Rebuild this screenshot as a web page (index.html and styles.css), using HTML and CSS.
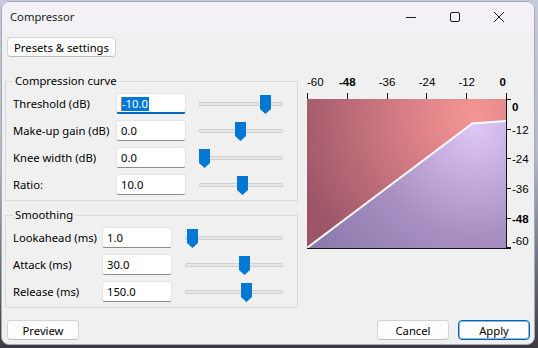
FILE: index.html
```html
<!DOCTYPE html>
<html>
<head>
<meta charset="utf-8">
<link rel="stylesheet" href="styles.css">
</head>
<body>
<div class="window">
  <div class="titlebar">
    <span class="title">Compressor</span>
    <span class="ctl"><svg width="10" height="10" viewBox="0 0 10 10"><line x1="0" y1="5.5" x2="10" y2="5.5"/></svg></span>
    <span class="ctl"><svg width="10" height="10" viewBox="0 0 10 10"><rect x="0.5" y="0.5" width="9" height="9" rx="1.5"/></svg></span>
    <span class="ctl"><svg width="10" height="10" viewBox="0 0 10 10"><line x1="0" y1="0" x2="10" y2="10"/><line x1="10" y1="0" x2="0" y2="10"/></svg></span>
  </div>
  <div class="content">
    <button class="btn presets">Presets &amp; settings</button>
    <div class="main">
      <div class="left">
        <fieldset class="group g1">
          <legend>Compression curve</legend>
          <div class="row">
            <span class="lbl">Threshold (dB)</span>
            <div class="tb focus"><span class="sel">-10.0</span></div>
            <div class="slider"><div class="track"></div><svg class="thumb" style="left:61px" viewBox="0 0 11 19"><polygon points="0,0 11,0 11,14 5.5,19 0,14"/></svg></div>
          </div>
          <div class="row">
            <span class="lbl">Make-up gain (dB)</span>
            <div class="tb">0.0</div>
            <div class="slider"><div class="track"></div><svg class="thumb" style="left:36px" viewBox="0 0 11 19"><polygon points="0,0 11,0 11,14 5.5,19 0,14"/></svg></div>
          </div>
          <div class="row">
            <span class="lbl">Knee width (dB)</span>
            <div class="tb">0.0</div>
            <div class="slider"><div class="track"></div><svg class="thumb" style="left:0px" viewBox="0 0 11 19"><polygon points="0,0 11,0 11,14 5.5,19 0,14"/></svg></div>
          </div>
          <div class="row">
            <span class="lbl">Ratio:</span>
            <div class="tb">10.0</div>
            <div class="slider"><div class="track"></div><svg class="thumb" style="left:38px" viewBox="0 0 11 19"><polygon points="0,0 11,0 11,14 5.5,19 0,14"/></svg></div>
          </div>
        </fieldset>
        <fieldset class="group g2">
          <legend>Smoothing</legend>
          <div class="row">
            <span class="lbl">Lookahead (ms)</span>
            <div class="tb">1.0</div>
            <div class="slider"><div class="track"></div><svg class="thumb" style="left:2px" viewBox="0 0 11 19"><polygon points="0,0 11,0 11,14 5.5,19 0,14"/></svg></div>
          </div>
          <div class="row">
            <span class="lbl">Attack (ms)</span>
            <div class="tb">30.0</div>
            <div class="slider"><div class="track"></div><svg class="thumb" style="left:54px" viewBox="0 0 11 19"><polygon points="0,0 11,0 11,14 5.5,19 0,14"/></svg></div>
          </div>
          <div class="row">
            <span class="lbl">Release (ms)</span>
            <div class="tb">150.0</div>
            <div class="slider"><div class="track"></div><svg class="thumb" style="left:56px" viewBox="0 0 11 19"><polygon points="0,0 11,0 11,14 5.5,19 0,14"/></svg></div>
          </div>
        </fieldset>
      </div>
      <svg class="graph" width="234" height="180" viewBox="298 74 234 180">
        <defs>
          <radialGradient id="up" gradientUnits="userSpaceOnUse" cx="474" cy="114" r="185">
            <stop offset="0" stop-color="#f49694"/>
            <stop offset="0.25" stop-color="#e2868a"/>
            <stop offset="1" stop-color="#9c5668"/>
          </radialGradient>
          <radialGradient id="lo" gradientUnits="userSpaceOnUse" cx="476" cy="128" r="215">
            <stop offset="0" stop-color="#ddc7f7"/>
            <stop offset="0.5" stop-color="#a78fc2"/>
            <stop offset="1" stop-color="#8676a6"/>
          </radialGradient>
        </defs>
        <polygon fill="url(#up)" points="307,99 506,99 506,121 472.3,123.5 307,248"/>
        <polygon fill="url(#lo)" points="307,248 472.3,123.5 506,121 506,248"/>
        <polyline class="curve" points="307.5,247.5 472.3,123.5 506,121"/>
        <g class="ticks">
          <line x1="307.5" y1="93" x2="307.5" y2="99"/>
          <line x1="347.5" y1="93" x2="347.5" y2="99"/>
          <line x1="387.5" y1="93" x2="387.5" y2="99"/>
          <line x1="426.5" y1="93" x2="426.5" y2="99"/>
          <line x1="466.5" y1="93" x2="466.5" y2="99"/>
          <line x1="506.5" y1="93" x2="506.5" y2="248"/>
          <line x1="506" y1="99.5" x2="511" y2="99.5"/>
          <line x1="506" y1="129.5" x2="511" y2="129.5"/>
          <line x1="506" y1="158.5" x2="511" y2="158.5"/>
          <line x1="506" y1="188.5" x2="511" y2="188.5"/>
          <line x1="506" y1="218.5" x2="511" y2="218.5"/>
          <line x1="506" y1="247.5" x2="511" y2="247.5"/>
          <line x1="307" y1="248.5" x2="511" y2="248.5"/>
        </g>
        <g class="lab">
          <text x="307" y="86">-60</text>
          <text x="347.3" y="86" text-anchor="middle" class="b">-48</text>
          <text x="387" y="86" text-anchor="middle">-36</text>
          <text x="427" y="86" text-anchor="middle">-24</text>
          <text x="466.7" y="86" text-anchor="middle">-12</text>
          <text x="506" y="86" text-anchor="end" class="b">0</text>
          <text x="512" y="111" class="b">0</text>
          <text x="512" y="133.5">-12</text>
          <text x="512" y="163">-24</text>
          <text x="512" y="193">-36</text>
          <text x="512" y="222.5" class="b">-48</text>
          <text x="512" y="245">-60</text>
        </g>
      </svg>
    </div>
    <div class="footer">
      <button class="btn wide">Preview</button>
      <span class="spacer"></span>
      <button class="btn wide cancel">Cancel</button>
      <button class="btn wide apply">Apply</button>
    </div>
  </div>
</div>
</body>
</html>
```

FILE: styles.css
```css
html, body {
  margin: 0;
  width: 538px;
  height: 348px;
  overflow: hidden;
}
body {
  background: linear-gradient(to bottom, #c6cadf 0%, #b4b8cf 45%, #3a3a42 100%);
  font-family: "Noto Sans", "Open Sans", sans-serif;
  font-size: 11.25px;
  color: #000;
}
.window {
  margin: 1px 0 0 1px;
  width: 534px;
  height: 344px;
  box-sizing: border-box;
  border: 1px solid #a9a9b4;
  border-radius: 8px;
  background: #f0f0f0;
  overflow: hidden;
  display: flex;
  flex-direction: column;
}
.titlebar {
  height: 29px;
  flex: none;
  background: #f3f1f6;
  display: flex;
  align-items: center;
  padding: 0 13px 0 8px;
}
.title {
  flex: 1;
  color: #1a1a1a;
}
.ctl {
  width: 44px;
  height: 29px;
  display: flex;
  align-items: center;
  justify-content: center;
}
.ctl svg {
  fill: none;
  stroke: #1c1c1c;
  stroke-width: 1;
}
.content {
  flex: 1;
  padding: 6px 4px 0 3px;
}
.btn {
  display: block;
  height: 20px;
  box-sizing: border-box;
  border: 1px solid #d4d4d4;
  border-bottom-color: #bcbcbc;
  border-radius: 4px;
  background: #fdfdfd;
  font: inherit;
  color: #000;
  padding: 0;
}
.presets {
  margin-left: 2px;
  width: 109px;
}
.main {
  display: flex;
  margin-top: 17px;
}
.left {
  width: 293px;
  flex: none;
}
.group {
  margin: 0;
  padding: 5px 6px 5px 7px;
  border: 1px solid #dadada;
  min-width: 0;
}
.group legend {
  padding: 0 2px;
  line-height: 14px;
}
.g2 {
  margin-top: 7px;
}
.row {
  display: flex;
  align-items: center;
  height: 21px;
}
.row + .row {
  margin-top: 6px;
}
.lbl {
  flex: none;
  white-space: nowrap;
}
.g1 .lbl {
  width: 103px;
}
.g2 .lbl {
  width: 89px;
}
.tb {
  flex: none;
  width: 70px;
  height: 21px;
  box-sizing: border-box;
  background: #fff;
  border: 1px solid #e3e3e3;
  border-bottom-color: #8a8a8a;
  border-radius: 3px;
  padding: 0 4px;
  display: flex;
  align-items: center;
}
.tb.focus {
  border-bottom: 2px solid #0067c0;
  padding-top: 1px;
}
.sel {
  background: #0078d7;
  color: #fff;
  line-height: 14px;
  border-left: 1px solid #c8772a;
  padding-right: 1px;
}
.slider {
  position: relative;
  flex: none;
  margin-left: 13px;
  height: 21px;
}
.g1 .slider {
  width: 84px;
}
.g2 .slider {
  width: 98px;
}
.track {
  margin-top: 9px;
  height: 4px;
  box-sizing: border-box;
  background: #e6e6e6;
  border: 1px solid #d0d0d0;
  border-radius: 1px;
}
.thumb {
  position: absolute;
  top: 2px;
  width: 11px;
  height: 19px;
  fill: #0078d4;
}
.graph {
  flex: none;
  overflow: visible;
}
.curve {
  fill: none;
  stroke: #ffffff;
  stroke-width: 2;
}
.ticks line {
  stroke: #111;
  stroke-width: 1;
}
.lab text {
  font-family: "Liberation Sans", Arial, sans-serif;
  font-size: 11.5px;
  fill: #000;
}
.lab text.b {
  font-weight: bold;
}
.footer {
  display: flex;
  margin-top: 12px;
  padding-left: 2px;
}
.spacer {
  flex: 1;
}
.wide {
  width: 72px;
}
.cancel {
  margin-right: 9px;
}
.apply {
  border: 1px solid #0063b8;
  box-shadow: inset 0 0 0 1px rgba(0, 99, 184, 0.45);
}
```
